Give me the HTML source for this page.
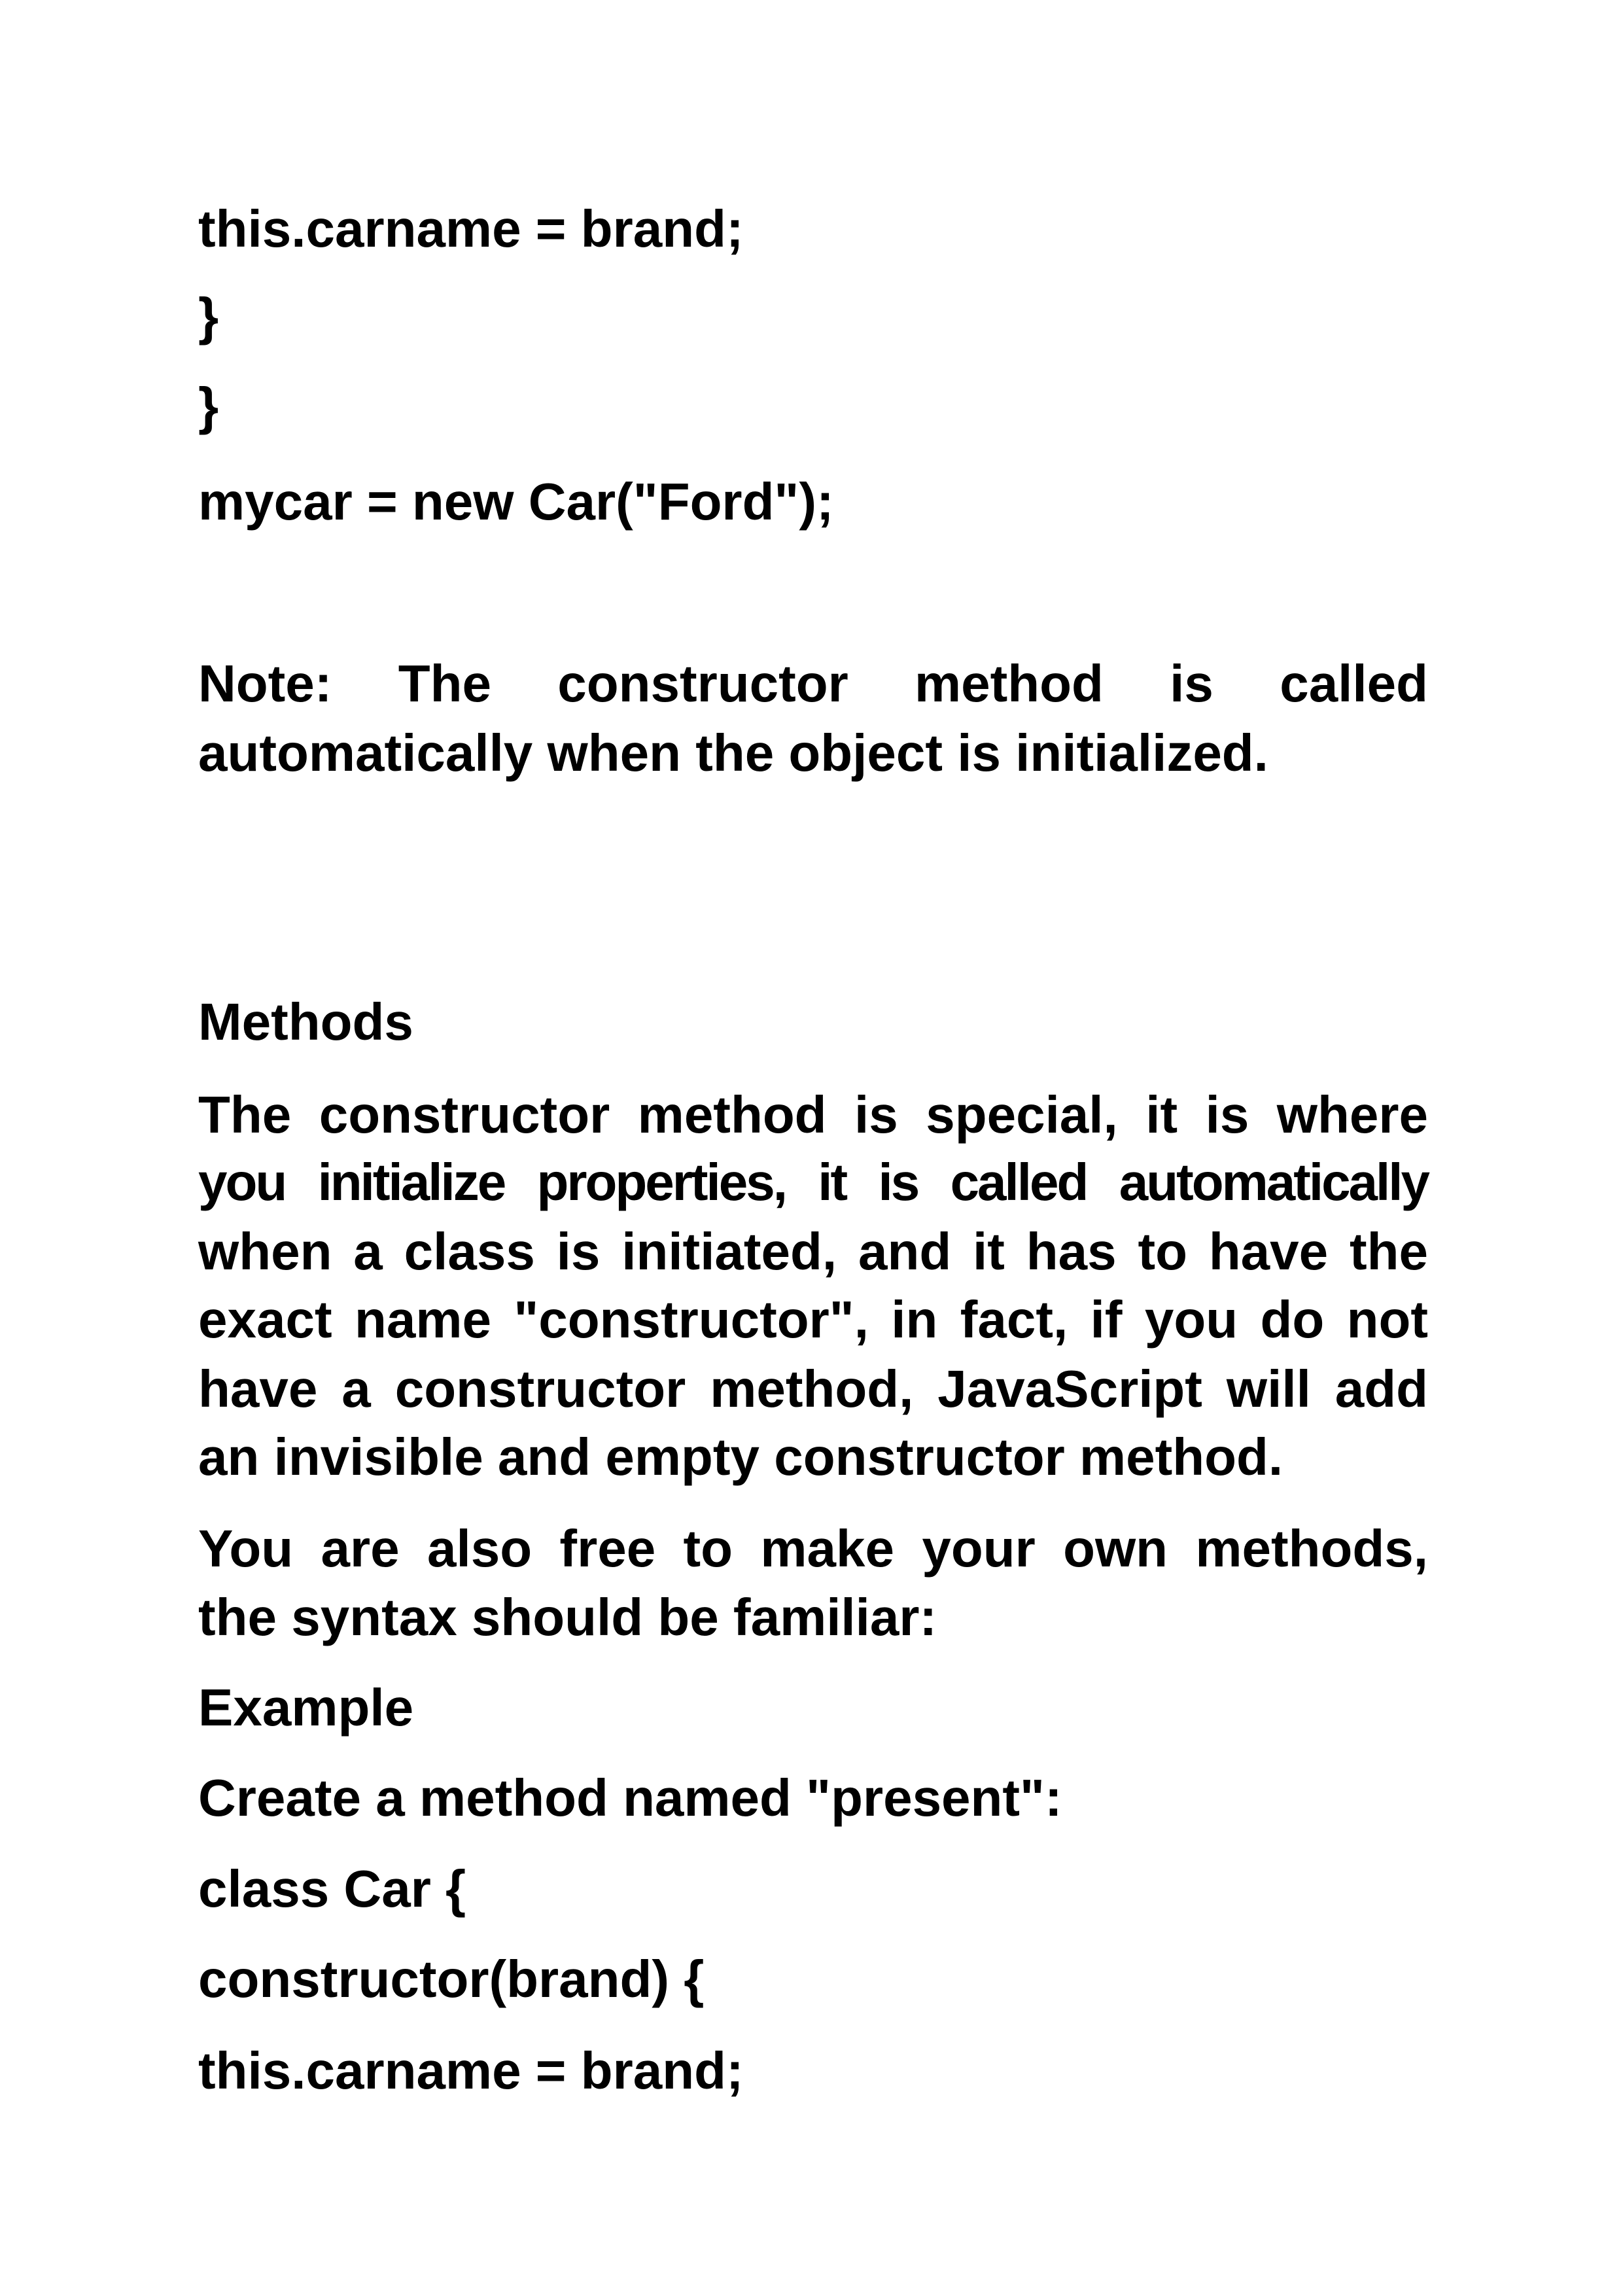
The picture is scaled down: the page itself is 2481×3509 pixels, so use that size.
<!DOCTYPE html>
<html><head><meta charset="utf-8"><style>
html,body{margin:0;padding:0;background:#fff;}
body{width:2481px;height:3509px;position:relative;overflow:hidden;}
.l{position:absolute;left:303px;font-family:"Liberation Sans",sans-serif;font-weight:bold;font-size:80px;line-height:80px;color:#000;white-space:nowrap;}
.j{width:1880px;text-align:justify;text-align-last:justify;white-space:normal;}
</style></head><body>
<div class="l" style="top:310px">this.carname = brand;</div>
<div class="l" style="top:444px">}</div>
<div class="l" style="top:581px">}</div>
<div class="l" style="top:727px">mycar = new Car("Ford");</div>
<div class="l j" style="top:1005px">Note: The constructor method is called</div>
<div class="l" style="top:1111px">automatically when the object is initialized.</div>
<div class="l" style="top:1522px">Methods</div>
<div class="l j" style="top:1664px">The constructor method is special, it is where</div>
<div class="l j" style="top:1767px;letter-spacing:-3px">you initialize properties, it is called automatically</div>
<div class="l j" style="top:1873px">when a class is initiated, and it has to have the</div>
<div class="l j" style="top:1977px">exact name "constructor", in fact, if you do not</div>
<div class="l j" style="top:2083px">have a constructor method, JavaScript will add</div>
<div class="l" style="top:2187px">an invisible and empty constructor method.</div>
<div class="l j" style="top:2327px">You are also free to make your own methods,</div>
<div class="l" style="top:2432px">the syntax should be familiar:</div>
<div class="l" style="top:2570px">Example</div>
<div class="l" style="top:2708px">Create a method named "present":</div>
<div class="l" style="top:2847px">class Car {</div>
<div class="l" style="top:2985px">constructor(brand) {</div>
<div class="l" style="top:3125px">this.carname = brand;</div>
</body></html>
